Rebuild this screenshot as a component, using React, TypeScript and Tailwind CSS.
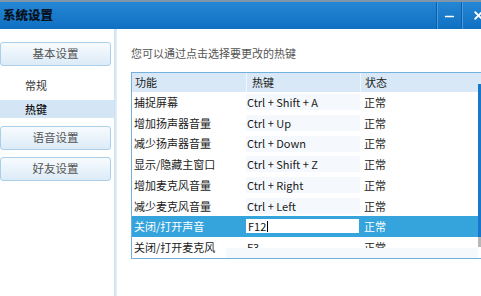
import { Minus, X } from "lucide-react";

const font = "[font-family:'Noto_Sans_CJK_SC','Noto_Sans',sans-serif]";

const hotkeys = [
  { name: "捕捉屏幕", key: "Ctrl + Shift + A" },
  { name: "增加扬声器音量", key: "Ctrl + Up" },
  { name: "减少扬声器音量", key: "Ctrl + Down" },
  { name: "显示/隐藏主窗口", key: "Ctrl + Shift + Z" },
  { name: "增加麦克风音量", key: "Ctrl + Right" },
  { name: "减少麦克风音量", key: "Ctrl + Left" },
] as const;

function NavButton({ label }: { label: string }) {
  return (
    <div className="flex h-[24px] w-[111px] items-center justify-center rounded-[3px] border border-[#a9cfea] bg-gradient-to-b from-[#f7fbfe] to-[#dcebf7] text-[11.5px] text-[#555]">
      {label}
    </div>
  );
}

function TitleBar() {
  return (
    <div className="flex h-[29px] shrink-0 items-stretch border-t-2 border-[#7f95aa] bg-gradient-to-b from-[#2586d4] to-[#0f70c2]">
      <div className="flex flex-1 items-center pl-[3px] text-[12.5px] font-black text-[#06121f]">
        系统设置
      </div>
      <div className="flex w-[25px] items-end justify-center border-l border-[#0b5fa8] pb-[6px] shadow-[inset_1px_0_0_#4a9be0]">
        <Minus className="h-[13px] w-[13px] text-white" strokeWidth={3.2} />
      </div>
      <div className="flex w-[20px] items-center justify-start overflow-hidden border-l border-[#0b5fa8] pl-[10px] shadow-[inset_1px_0_0_#4a9be0]">
        <X className="h-[13px] w-[13px] shrink-0 text-white" strokeWidth={3.4} />
      </div>
    </div>
  );
}

function Sidebar() {
  return (
    <div className="flex w-[114px] shrink-0 flex-col pt-[13px]">
      <NavButton label="基本设置" />
      <div className="mt-[10px] flex h-[18px] items-center pl-[25px] text-[11px] text-[#333]">
        常规
      </div>
      <div className="mt-[6px] flex h-[18px] items-center bg-[#d4e5f6] pl-[25px] text-[11px] font-medium text-[#111]">
        热键
      </div>
      <div className="mt-[8px] flex flex-col gap-[7px]">
        <NavButton label="语音设置" />
        <NavButton label="好友设置" />
      </div>
    </div>
  );
}

function HotkeyTable() {
  return (
    <div className="mt-[11px] flex w-[350px] border-y border-l border-[#72b0de] text-[11px]">
      <div className="flex w-[346px] flex-col">
        <div className="flex h-[19px] items-center bg-[#d8e8f6] text-[#222]">
          <div className="w-[114px] pl-[3px]">功能</div>
          <div className="flex h-full w-[114px] items-center border-l border-[#f2f7fc] pl-[5px]">热键</div>
          <div className="flex h-full flex-1 items-center border-l border-[#f2f7fc] pl-[4px]">状态</div>
        </div>
        {hotkeys.map((row) => (
          <div key={row.name} className="flex h-[20.7px] items-center text-[#1a1a1a]">
            <div className="w-[114px] pl-[2px]">{row.name}</div>
            <div className="flex h-[16px] w-[114px] items-center bg-[#f5f9fd] pl-[1px]">{row.key}</div>
            <div className="flex-1 pl-[4px]">正常</div>
          </div>
        ))}
        <div className="flex h-[20.7px] items-center bg-[#35a3dc] text-white">
          <div className="w-[114px] pl-[2px]">关闭/打开声音</div>
          <div className="flex h-[14px] w-[113px] items-center bg-white pl-[2px] text-[#111]">
            F12<span className="ml-[1px] h-[11px] w-px bg-black" />
          </div>
          <div className="flex-1 pl-[5px]">正常</div>
        </div>
        <div className="flex h-[20.7px] items-start text-[#1a1a1a]">
          <div className="flex h-full w-[114px] items-center pl-[2px]">关闭/打开麦克风</div>
          <div className="flex h-full flex-1 flex-col">
            <div className="flex h-[11px] overflow-hidden">
              <div className="h-[21px] w-[114px] shrink-0 pl-[1px] leading-[21px]">F3</div>
              <div className="h-[21px] flex-1 pl-[4px] leading-[21px]">正常</div>
            </div>
            <div className="-ml-[20px] flex-1 bg-[#f6f9fb]" />
          </div>
        </div>
      </div>
      <div className="flex w-[3px] flex-col">
        <div className="h-[11px] bg-[#d8e8f6]" />
        <div className="h-[153px] bg-[#1777cc]" />
        <div className="h-[10px] bg-[#b8b8b8]" />
      </div>
    </div>
  );
}

export default function App() {
  return (
    <div className={`flex h-[296px] w-[481px] flex-col overflow-hidden bg-white ${font}`}>
      <TitleBar />
      <div className="flex flex-1">
        <Sidebar />
        <div className="w-[3px] shrink-0 bg-gradient-to-r from-[#c9dff2] to-[#e6f0f9]" />
        <div className="flex flex-1 flex-col pl-[14px] pt-[16px]">
          <div className="h-[16px] text-[11px] leading-[16px] text-[#555]">您可以通过点击选择要更改的热键</div>
          <HotkeyTable />
        </div>
      </div>
    </div>
  );
}
